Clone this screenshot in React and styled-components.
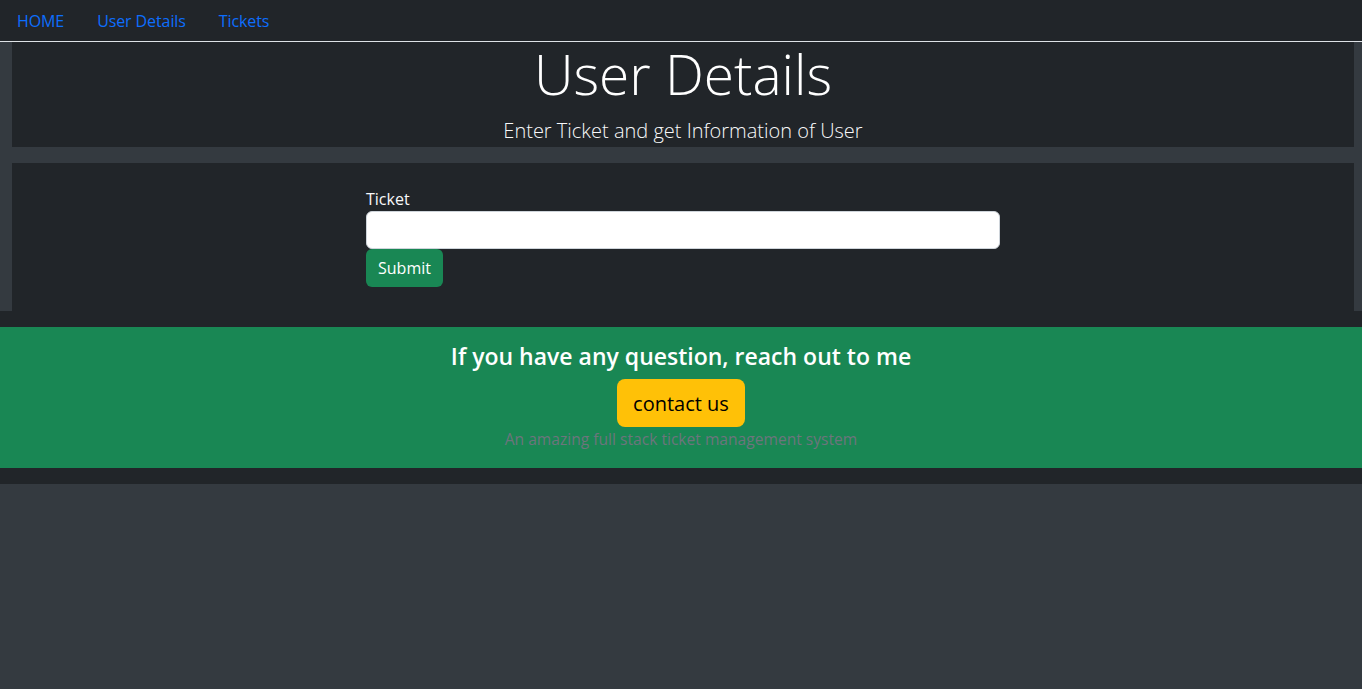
import styled, { createGlobalStyle } from "styled-components";

const GlobalStyle = createGlobalStyle`
  * { box-sizing: border-box; }
  html, body {
    margin: 0;
    padding: 0;
    background-color: #343a40;
    font-family: "Open Sans", "Noto Sans", sans-serif;
    font-size: 16px;
    color: #fff;
  }
`;

const Nav = styled.nav`
  height: 42px;
  background-color: #212529;
  border-bottom: 1px solid #dee2e6;
  display: flex;
  align-items: center;
  padding-left: 17px;
  gap: 33px;
`;

const NavLink = styled.a`
  color: #0d6efd;
  text-decoration: none;
  font-size: 16px;
  line-height: 24px;
  letter-spacing: -0.1px;
`;

const Main = styled.main`
  padding: 0 8px 0 12px;
  display: flex;
  flex-direction: column;
  gap: 16px;
`;

const Panel = styled.section`
  background-color: #212529;
  padding: ${(props) => props.pad || "0"};
  text-align: center;
`;

const Title = styled.h1`
  margin: 0;
  font-size: 55px;
  font-weight: 300;
  line-height: 64px;
`;

const Lead = styled.p`
  margin: 10px 0 0;
  font-size: 20px;
  font-weight: 300;
  line-height: 30px;
  color: #f8f9fa;
`;

const Form = styled.form`
  width: 634px;
  margin: 0 auto 0 354px;
  text-align: left;
  display: flex;
  flex-direction: column;
  align-items: flex-start;
`;

const Label = styled.label`
  font-size: 16px;
  line-height: 24px;
  color: #f8f9fa;
`;

const Input = styled.input`
  width: 100%;
  height: 38px;
  border: 1px solid #ced4da;
  border-radius: 6px;
  background: #fff;
  font-size: 16px;
  padding: 6px 12px;
`;

const Button = styled.button`
  font-family: inherit;
  border: none;
  border-radius: ${(props) => (props.large ? "8px" : "6px")};
  background-color: ${(props) => props.bg};
  color: ${(props) => props.fg};
  font-size: ${(props) => (props.large ? "20px" : "16px")};
  height: ${(props) => (props.large ? "48px" : "38px")};
  padding: ${(props) => (props.large ? "0 16px" : "0 12px")};
  cursor: pointer;
`;

const FooterWrap = styled.div`
  background-color: #212529;
  padding: 16px 0;
`;

const Footer = styled.footer`
  background-color: #198754;
  padding: 15px 0 17px;
  display: flex;
  flex-direction: column;
  align-items: center;
`;

const FooterTitle = styled.h4`
  margin: 0 0 8px;
  font-size: 23px;
  font-weight: 600;
  line-height: 29px;
`;

const Muted = styled.p`
  margin: 0;
  color: #6c757d;
  font-size: 15.6px;
  line-height: 24px;
`;

export default function App() {
  return (
    <>
      <GlobalStyle />
      <Nav>
        <NavLink href="#">HOME</NavLink>
        <NavLink href="#">User Details</NavLink>
        <NavLink href="#">Tickets</NavLink>
      </Nav>
      <Main>
        <Panel pad="0 0 1px">
          <Title>User Details</Title>
          <Lead>Enter Ticket and get Information of User</Lead>
        </Panel>
        <Panel pad="24px 0 24px">
          <Form onSubmit={(e) => e.preventDefault()}>
            <Label htmlFor="ticket">Ticket</Label>
            <Input id="ticket" type="text" />
            <Button bg="#198754" fg="#fff" type="submit">
              Submit
            </Button>
          </Form>
        </Panel>
      </Main>
      <FooterWrap>
        <Footer>
          <FooterTitle>If you have any question, reach out to me</FooterTitle>
          <Button large bg="#ffc107" fg="#000" type="button">
            contact us
          </Button>
          <Muted>An amazing full stack ticket management system</Muted>
        </Footer>
      </FooterWrap>
    </>
  );
}
